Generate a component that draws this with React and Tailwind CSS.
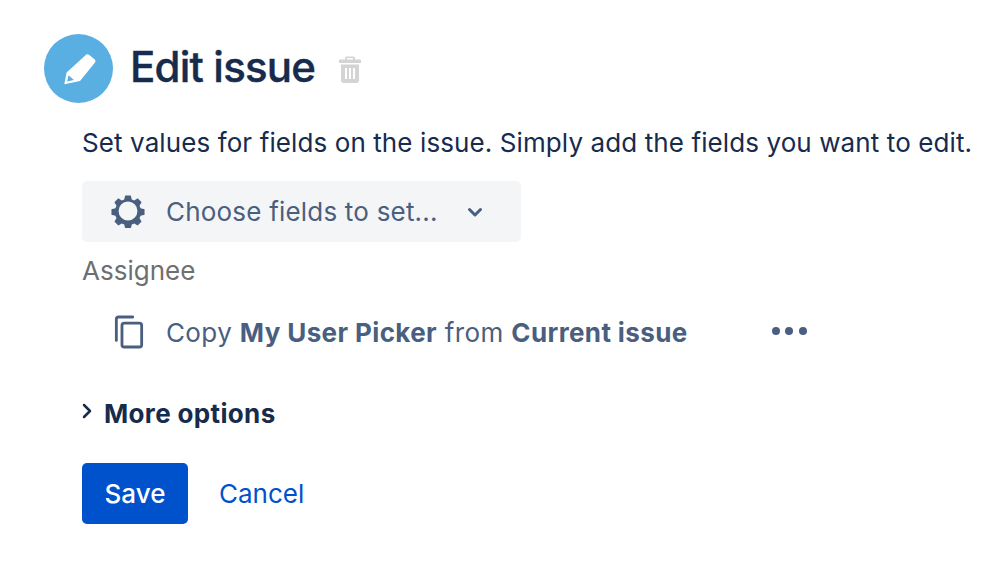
import React from 'react';

const GearIcon = () => (
  <svg width="34" height="34" viewBox="0 0 36 36" className="text-[#4a5f80] ml-[2px] mb-[1px]">
    <path
      fill="currentColor"
      fillRule="evenodd"
      d="M15 1.5h6l1 4.2 2.6 1.1 3.7-2.2 4.1 4.2-2.2 3.6 1.1 2.7 4.2 1v5.8l-4.2 1-1.1 2.7 2.2 3.6-4.1 4.2-3.7-2.2-2.6 1.1-1 4.2h-6l-1-4.2-2.6-1.1-3.7 2.2-4.1-4.2 2.2-3.6-1.1-2.7-4.2-1v-5.8l4.2-1 1.1-2.7-2.2-3.6 4.100-4.200 3.700 2.200 2.600-1.100zM18 8a10 10 0 1 0 0 20 10 10 0 0 0 0-20z"
    />
  </svg>
);

const CopyIcon = () => (
  <svg width="30" height="34" viewBox="0 0 32 36" fill="none" stroke="#4a5f80" strokeWidth="3" className="block mb-[2px]">
    <path d="M20 2H4.500A2 2 0 0 0 2.500 4v23" strokeLinecap="round" />
    <rect x="8.500" y="8.500" width="21" height="25.500" rx="2.500" />
  </svg>
);

const App = () => {
  return (
    <div className="w-[999px] h-[580px] overflow-hidden bg-white pl-[44px] pt-[34px] font-['Inter',sans-serif] text-[#172b4d]">
      {/* header */}
      <div className="flex items-center h-[69px]">
        <div className="w-[69px] h-[69px] rounded-full bg-[#5aafe2] flex items-center justify-center">
          <svg width="34" height="34" viewBox="0 0 34 34" className="ml-[1px]">
            <path
              fill="#fff"
              fillRule="evenodd"
              d="M23.500 3.200c1-1.200 2.400-1.300 3.500-.4l5.500 4.500c1.100.9 1.300 2.300.3 3.500L18 29 2.300 32.300 4.600 20.600zM6.500 23.200l-1.300 6.300 6.700-1.400z"
            />
          </svg>
        </div>
        <h1 className="ml-[17px] mb-[4px] text-[42px] leading-none font-medium tracking-[-0.8px] [-webkit-text-stroke:0.4px_#172b4d]">Edit issue</h1>
        <svg width="22" height="28" viewBox="0 0 22 28" className="ml-[24px]">
          <path fill="#d4d4d4" d="M7.500 1.500h7a1.500 1.500 0 0 1 1.500 1.500v1.500h5a1 1 0 0 1 1 1V8H0V5.500a1 1 0 0 1 1-1h5V3a1.500 1.500 0 0 1 1.500-1.500zM8 3v1.500h6V3z" />
          <path fill="#d4d4d4" fillRule="evenodd" d="M2 9.500h18V25a3 3 0 0 1-3 3H5a3 3 0 0 1-3-3zM6 13v11h2V13zm4 0v11h2V13zm4 0v11h2V13z" />
        </svg>
      </div>

      {/* body */}
      <div className="pl-[38px]">
        <p className="mt-[23px] text-[26px] tracking-[0.1px] leading-[34px] whitespace-nowrap">
          Set values for fields on the issue. Simply add the fields you want to edit.
        </p>

        <div className="mt-[21px] w-[439px] h-[61px] rounded-[5px] bg-[#f4f5f7] flex items-center pl-[27px] text-[#4a5f80]">
          <GearIcon />
          <span className="ml-[21px] mb-[1px] text-[26px] tracking-[0.2px] whitespace-nowrap">Choose fields to set...</span>
          <svg width="16" height="11" viewBox="0 0 16 11" className="ml-[29px] mt-[1px]">
            <path d="M2.500 2.500l5.500 5.500 5.500-5.500" fill="none" stroke="#4a5f80" strokeWidth="3" strokeLinecap="round" strokeLinejoin="round" />
          </svg>
        </div>

        <div className="mt-[12px] text-[26px] leading-[34px] text-[#6f6f6f]">Assignee</div>

        <div className="mt-[27px] flex items-center h-[36px] pl-[32px] text-[#4a5f80] text-[26px] tracking-[0.38px] whitespace-nowrap">
          <CopyIcon />
          <span className="ml-[22px] mb-[2px]">
            Copy <b className="font-bold">My User Picker</b> from <b className="font-bold">Current issue</b>
          </span>
          <div className="ml-[84px] mb-[4px] flex gap-[5.500px]">
            <span className="w-[8px] h-[8px] rounded-full bg-[#4a5f80]" />
            <span className="w-[8px] h-[8px] rounded-full bg-[#4a5f80]" />
            <span className="w-[8px] h-[8px] rounded-full bg-[#4a5f80]" />
          </div>
        </div>

        <div className="mt-[44px] flex items-center h-[36px]">
          <svg width="10" height="16" viewBox="0 0 10 16" className="mb-[4px]">
            <path d="M2 2l6 6-6 6" fill="none" stroke="#172b4d" strokeWidth="2.500" strokeLinecap="round" strokeLinejoin="round" />
          </svg>
          <span className="ml-[12px] text-[26px] tracking-[0.35px] font-bold">More options</span>
        </div>

        <div className="mt-[32px] flex items-center">
          <button className="w-[106px] h-[61px] rounded-[5px] bg-[#0052cc] text-white text-[26px] font-medium">Save</button>
          <a className="ml-[31px] text-[26px] text-[#0052cc]">Cancel</a>
        </div>
      </div>
    </div>
  );
};

export default App;
